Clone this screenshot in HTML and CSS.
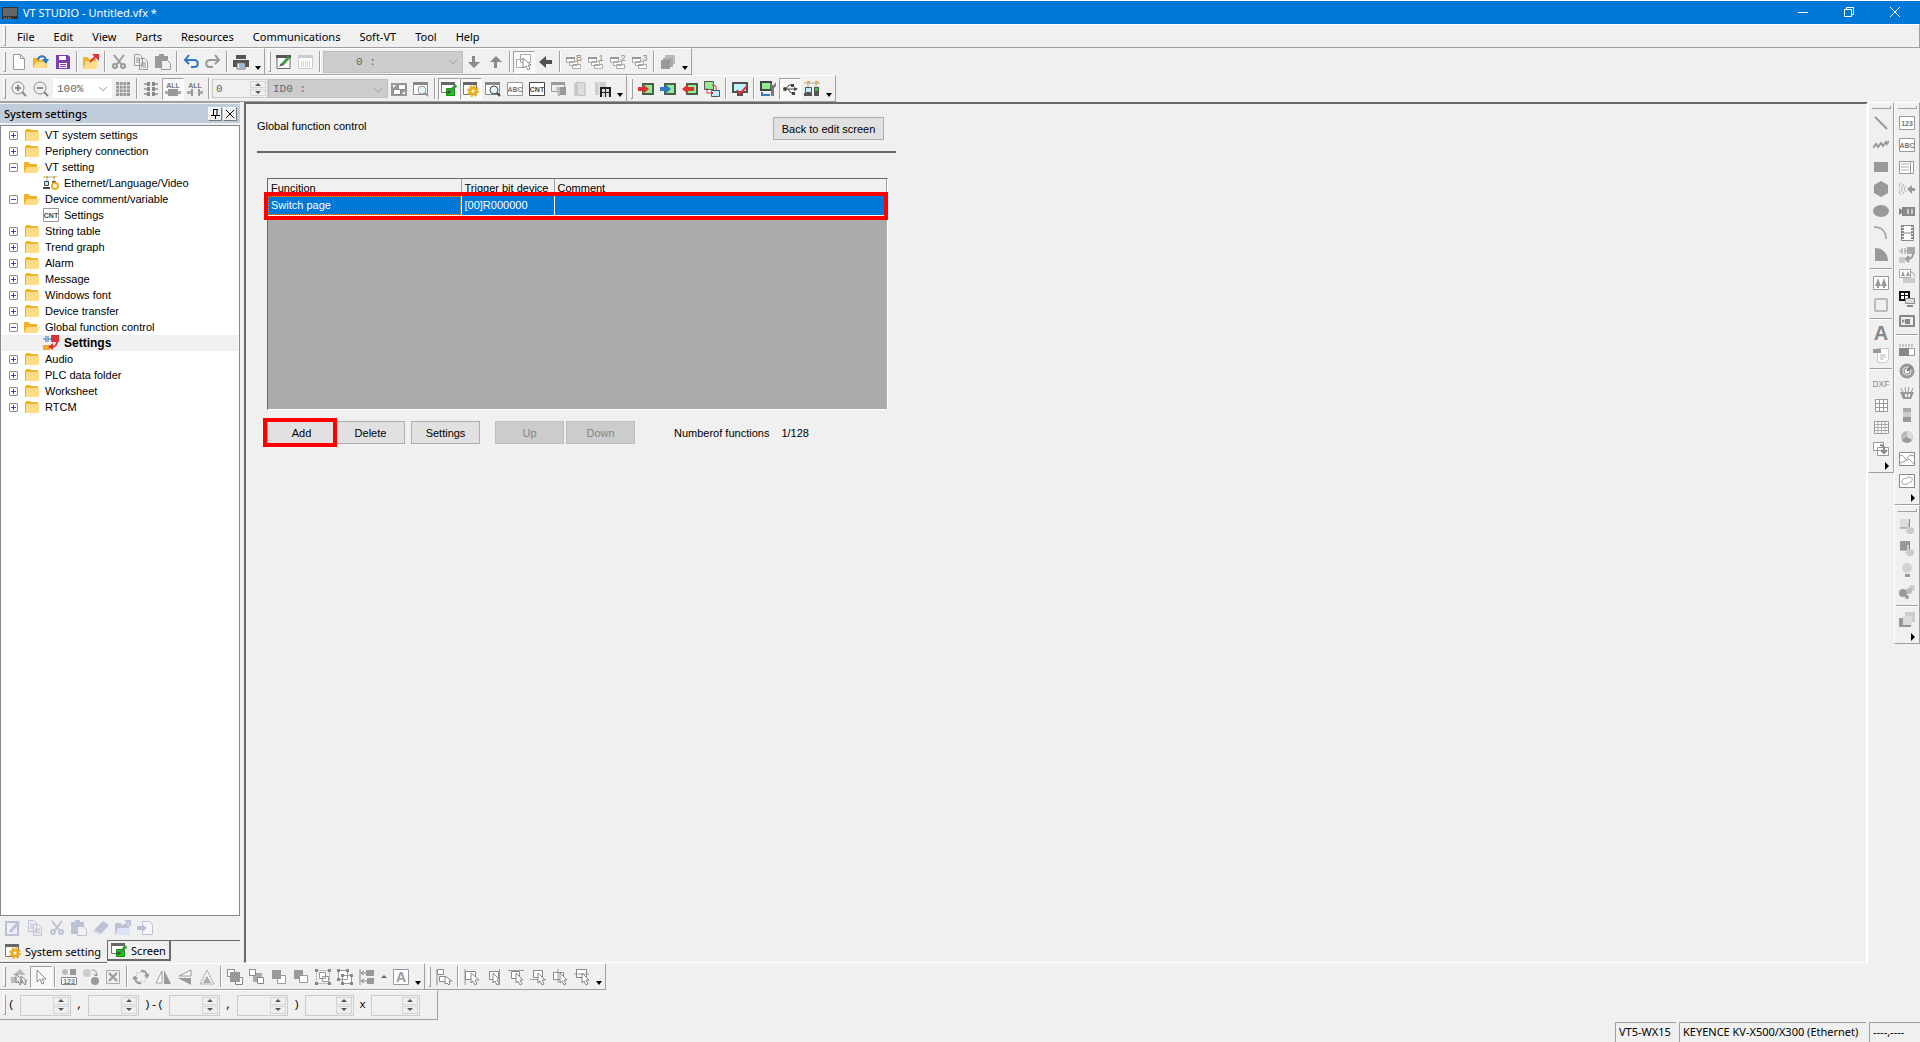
FILE: index.html
```html
<!DOCTYPE html>
<html lang="en">
<head>
  <meta charset="UTF-8">
  <meta name="viewport" content="width=device-width, initial-scale=1.0">
  <title>VT STUDIO - Untitled.vfx *</title>
  <link rel="stylesheet" href="styles.css">
</head>
<body>
  <!-- Icon sprite -->
  <svg class="sprite" aria-hidden="true">
    <symbol id="i-new" viewBox="0 0 16 16"><path d="M2.500.5h7l4 4v11h-11zM9.500.5v4h4" fill="#fff" stroke="#999"/></symbol>
    <symbol id="i-open" viewBox="0 0 16 16"><path d="M0 4h5l1 2h8v8H0z" fill="#efb32f"/><path d="M3 8h12l-2 6H0z" fill="#ffdc86"/><path d="M5 6c1-5 7-5 8 0" fill="none" stroke="#2f78c4" stroke-width="2"/><path d="M9 5h7l-3 5z" fill="#2f78c4"/></symbol>
    <symbol id="i-save" viewBox="0 0 16 16"><path d="M1 1h12l2 2v12H1z" fill="#7d3fb0"/><path d="M4 2h7v4H4zM4 9h8v5H4z" fill="#fff"/><path d="M5 10h6v1H5zM5 12h6v1H5z" fill="#7d3fb0"/></symbol>
    <symbol id="i-export" viewBox="0 0 16 16"><path d="M0 3h5l1 2h7v9H0z" fill="#efb32f"/><path d="M3 7h12l-2 8H0z" fill="#ffdc86"/><path d="M7 8l6-6" stroke="#dc3434" stroke-width="2"/><path d="M9 0h7v7z" fill="#dc3434"/></symbol>
    <symbol id="i-cut" viewBox="0 0 16 16"><g fill="none" stroke="currentColor" stroke-width="2"><path d="M3 1l7 9M13 1l-7 9"/><circle cx="4" cy="12" r="2"/><circle cx="12" cy="12" r="2"/></g></symbol>
    <symbol id="i-copy" viewBox="0 0 16 16"><path d="M1.500.5h5l3 3v8h-8zM6.500 4.500h5l3 3v8h-8z" fill="#f0f0f0" stroke="currentColor"/><path d="M3 4h3M3 6h3M3 8h3M8 9h5M8 11h5M8 13h5" stroke="currentColor"/></symbol>
    <symbol id="i-paste" viewBox="0 0 16 16"><path d="M0 2h4V0h5v2h4v12H0z" fill="currentColor"/><path d="M6.500 6.500h6l3 3v6h-9z" fill="#f0f0f0" stroke="currentColor"/></symbol>
    <symbol id="i-undo" viewBox="0 0 16 16"><path d="M2 6h9c5 0 5 7 0 7H8M6 1L2 6l4 4" fill="none" stroke="currentColor" stroke-width="2"/></symbol>
    <symbol id="i-redo" viewBox="0 0 16 16"><path d="M14 6H5c-5 0-5 7 0 7h3M10 1l4 5-4 4" fill="none" stroke="currentColor" stroke-width="2"/></symbol>
    <symbol id="i-print" viewBox="0 0 16 16"><path d="M3 1h10v4H3zM0 6h16v7H0z" fill="#555"/><path d="M4 9h8v6H4z" fill="#fff" stroke="#666"/><path d="M6 11h5M6 13h5" stroke="#2f78c4"/></symbol>
    <symbol id="i-edit" viewBox="0 0 16 16"><path d="M1 2.500h13v12H1z" fill="#fff" stroke="#666"/><path d="M0 1h15v3H0z" fill="#555"/><path d="M6 11l7-8" stroke="#3aa046" stroke-width="3"/><path d="M3 13l2-4 2 2z" fill="#555"/></symbol>
    <symbol id="i-window" viewBox="0 0 16 16"><path d="M.5 1.500h14v13H.5z" fill="#fff" stroke="#ccc"/><path d="M0 1h15v3H0z" fill="#ccc"/><path d="M3 8h9M3 10h9M3 12h9" stroke="#aaa" stroke-dasharray="1 1"/></symbol>
    <symbol id="i-down" viewBox="0 0 16 16"><path d="M6 2h3v6h5l-6 6-6-6h4z" fill="#8a8a8a"/></symbol>
    <symbol id="i-up" viewBox="0 0 16 16"><path d="M6 14h3V8h5L8 2 2 8h4z" fill="#8a8a8a"/></symbol>
    <symbol id="i-left" viewBox="0 0 16 16"><path d="M14 6v4H8v4L1 8l7-6v4z" fill="#505050"/></symbol>
    <symbol id="i-selwin" viewBox="0 0 16 16"><path d="M4.500.5h10v8h-10zM.5 5.500h8v8h-8z" fill="#fff" stroke="#aaa"/><path d="M7 4v10l3-2 2 4 2-1-2-4h3z" fill="#fff" stroke="#888"/></symbol>
    <symbol id="i-base" viewBox="0 0 16 16"><path d="M6.500 10.500h8v4h-8zM3.500 7.500h8v4h-8zM.5 3.500h8v5h-8z" fill="#fff" stroke="#aaa"/><path d="M0 3h9v2H0z" fill="#999"/></symbol>
    <symbol id="i-layers" viewBox="0 0 16 16"><path d="M5 1h10v9H5z" fill="#bbb"/><path d="M3 4h10v9H3z" fill="#aaa"/><path d="M1 6h9v9H1z" fill="#999"/></symbol>
    <symbol id="i-zoomin" viewBox="0 0 16 16"><g fill="none" stroke="#8a8a8a"><circle cx="7" cy="7" r="6"/><path d="M7 4v6M4 7h6" stroke-width="2"/><path d="M11 11l4 4" stroke-width="2"/></g></symbol>
    <symbol id="i-zoomout" viewBox="0 0 16 16"><g fill="none" stroke="#8a8a8a"><circle cx="7" cy="7" r="6"/><path d="M4 7h6M11 11l4 4" stroke-width="2"/></g></symbol>
    <symbol id="i-dots" viewBox="0 0 16 16"><path d="M1 1h14v14H1z" fill="#999"/><path d="M4.500 1v14M8 1v14M11.500 1v14M1 4.500h14M1 8h14M1 11.500h14" stroke="#ddd"/></symbol>
    <symbol id="i-ladder" viewBox="0 0 16 16"><path d="M1 2h14v2H1zM1 7h14v2H1zM1 12h14v2H1z" fill="#aaa"/><path d="M4 1h8v4H4zM4 6h8v4H4zM4 11h8v4H4z" fill="#888"/><path d="M7 1h2v14H7z" fill="#eee"/></symbol>
    <symbol id="i-all1" viewBox="0 0 16 16"><text x="8" y="7" class="t7" fill="#777">ALL</text><path d="M0 10h16v3H0z" fill="#aaa"/><path d="M3 8h10v7H3z" fill="#999"/></symbol>
    <symbol id="i-all2" viewBox="0 0 16 16"><text x="8" y="7" class="t7" fill="#777">ALL</text><path d="M0 10h6v3H0zM11 10h5v3h-5z" fill="#aaa"/><path d="M4 8h2v7H4zM11 8h2v7h-2z" fill="#999"/></symbol>
    <symbol id="i-swap" viewBox="0 0 16 16"><path d="M0 2h16v13H0z" fill="#999"/><path d="M7.500 3.500h7v5h-7zM2.500 8.500h7v5h-7z" fill="#fff" stroke="#888"/><path d="M2 7V4h3zM14 10v3h-3z" fill="#fff"/></symbol>
    <symbol id="i-find" viewBox="0 0 16 16"><path d="M.5 1.500h14v12H.5z" fill="#fff" stroke="#888"/><path d="M0 1h15v3H0z" fill="#888"/><circle cx="9" cy="9" r="4" fill="#e6f6fc" stroke="currentColor"/><path d="M12 12l3 3" stroke="currentColor" stroke-width="2"/></symbol>
    <symbol id="i-screen" viewBox="0 0 16 16"><path d="M.5 1.500h13v10H.5z" fill="#fff" stroke="#777"/><path d="M0 1h14v3H0z" fill="#666"/><path d="M5.500 7.500h8v7h-8z" fill="#0bd80b" stroke="#168a16"/><path d="M8 12l7-8" stroke="#3c983c" stroke-width="3"/><path d="M6 13l1-4 3 3z" fill="#444"/></symbol>
    <symbol id="i-gear" viewBox="0 0 16 16"><path d="M.5 1.500h13v12H.5z" fill="#fff" stroke="#777"/><path d="M0 1h14v3H0z" fill="#666"/><circle cx="10" cy="10" r="5" fill="none" stroke="#edae24" stroke-width="2" stroke-dasharray="2 1.900"/><circle cx="10" cy="10" r="3" fill="#fff" stroke="#edae24" stroke-width="3"/></symbol>
    <symbol id="i-abc" viewBox="0 0 16 16"><path d="M.5 1.500h15v13H.5z" fill="#fff" stroke="currentColor"/><text x="8" y="11" class="t7" fill="#777">ABC</text></symbol>
    <symbol id="i-cnt" viewBox="0 0 16 16"><path d="M.5 1.500h15v13H.5z" fill="#fff" stroke="currentColor"/><text x="8" y="11" class="t7" fill="#444">CNT</text></symbol>
    <symbol id="i-123" viewBox="0 0 16 16"><path d="M.5 1.500h15v13H.5z" fill="#fff" stroke="currentColor"/><text x="8" y="11" class="t7" fill="#777">123</text></symbol>
    <symbol id="i-panel" viewBox="0 0 16 16"><path d="M.5 2.500h13v8H.5z" fill="#eee" stroke="#999"/><path d="M0 1h14v3H0z" fill="#999"/><path d="M5 6h10v7H9v2H7z" fill="#bbb"/><path d="M9 6h6v8H9z" fill="#999"/></symbol>
    <symbol id="i-book" viewBox="0 0 16 16"><path d="M1 2l9-1v13l-9 1z" fill="#ccc"/><path d="M4 1l8 1v13l-8-1z" fill="#ddd" stroke="#bbb"/></symbol>
    <symbol id="i-lib" viewBox="0 0 16 16"><path d="M0 1h11v13H0z" fill="#ccc"/><path d="M4 1v13" stroke="#eee"/><path d="M5 6h11v10H5z" fill="#222"/><path d="M7 8h3v3H7zM11 8h3v3h-3zM7 12h3v4H7zM11 12h3v4h-3z" fill="#ddd"/></symbol>
    <symbol id="i-send" viewBox="0 0 16 16"><path d="M4 2h12v12H4z" fill="#4a5f4a"/><path d="M6 4h8v8H6z" fill="#90ee90"/><path d="M0 6h5V3l6 5-6 5v-3H0z" fill="currentColor"/></symbol>
    <symbol id="i-recv" viewBox="0 0 16 16"><path d="M4 2h12v12H4z" fill="#4a5f4a"/><path d="M6 4h8v8H6z" fill="#90ee90"/><path d="M12 6H6V3L0 8l6 5v-3h6z" fill="#dc3434"/></symbol>
    <symbol id="i-sync" viewBox="0 0 16 16"><path d="M.5.5h9v8h-9z" fill="#90ee90" stroke="#555"/><path d="M7.500 9.500h8v6h-8z" fill="#bdeaff" stroke="#555"/><path d="M3 7v5h6M7 10l2 2-2 2M8 4l4 1v4" fill="none" stroke="#dc3434"/></symbol>
    <symbol id="i-check" viewBox="0 0 16 16"><path d="M0 1h16v11H0zM5 12h6v3H5z" fill="#505050"/><path d="M2 3h12v7H2z" fill="#bdf3ff"/><path d="M5 9l3 4 7-8" fill="none" stroke="#dc3434" stroke-width="2"/></symbol>
    <symbol id="i-tool" viewBox="0 0 16 16"><path d="M0 0h12v10H0z" fill="#444"/><path d="M2 2h8v6H2z" fill="#90ee90"/><path d="M10 1l2 3h2l2-3v4l-2 2v8h-3V7l-1-2z" fill="#777"/><path d="M2 11v3h8" fill="none" stroke="#2f78c4" stroke-width="2"/></symbol>
    <symbol id="i-usb" viewBox="0 0 16 16"><path d="M2 8h13M4 8l3-4h3M6 8l3 4h3" fill="none" stroke="#444"/><circle cx="3" cy="8" r="2" fill="#444"/><path d="M12 6l4 2-4 2zM9 3h3v3H9zM10 11h3v3h-3z" fill="#444"/></symbol>
    <symbol id="i-net" viewBox="0 0 16 16"><path d="M0 2h16M4 2v5M12 2v5" stroke="#aaa"/><path d="M3 0h3v3H3zM11 0h3v3h-3z" fill="#edae24"/><path d="M1.500 6.500h6v5h-6z" fill="#bdeaff" stroke="#555"/><path d="M0 12h8v3H0zM10 6h5v9h-5z" fill="#555"/><path d="M11 7h3v3h-3z" fill="#3c3"/></symbol>
    <symbol id="i-ether" viewBox="0 0 16 16"><path d="M0 2h14M4 2v5M11 2v5" stroke="#aaa"/><path d="M3 1h2v2H3zM10 1h2v2h-2z" fill="#edae24"/><path d="M1.500 6.500h4v4h-4z" fill="#bdeaff" stroke="#444"/><path d="M0 12h7v2H0z" fill="#444"/><path d="M9 6h4v5H9z" fill="#666"/><circle cx="12" cy="11" r="3" fill="#fff" stroke="#edae24" stroke-width="2"/></symbol>
    <symbol id="i-global" viewBox="0 0 16 16"><path d="M0 4h3M3 1v6M5 1v6M5 4h3" stroke="#2f78c4" fill="none"/><path d="M8 0h8v7H8z" fill="#dc3434"/><path d="M0 10h7v5H0z" fill="#edae24"/><path d="M14 6c0 5-2 6-6 6" fill="none" stroke="#dc3434" stroke-width="2"/><path d="M10 8v7l-5-3z" fill="#dc3434"/></symbol>
    <symbol id="i-folder" viewBox="0 0 16 16"><path d="M1 3h1V2h4l1 1h7v11H1z" fill="#efb32f"/><path d="M2 5h13v9H2z" fill="#ffdc86"/></symbol>
    <symbol id="i-folder-open" viewBox="0 0 16 16"><path d="M0 3h5l1 2h7v9H0z" fill="#efb32f"/><path d="M3 8h13l-3 6H0z" fill="#ffdc86"/></symbol>

    <!-- Drawing parts -->
    <symbol id="i-line" viewBox="0 0 16 16"><path d="M2 2l12 12" stroke="#999" stroke-width="2"/></symbol>
    <symbol id="i-poly" viewBox="0 0 16 16"><path d="M0 11l3-4 2 3 3-4 2 3 3-4 1 2 2-3" fill="none" stroke="#999" stroke-width="2"/></symbol>
    <symbol id="i-rect" viewBox="0 0 16 16"><path d="M1 3h14v10H1z" fill="#999"/></symbol>
    <symbol id="i-hex" viewBox="0 0 16 16"><path d="M8 0l7 4v8l-7 4-7-4V4z" fill="#999"/></symbol>
    <symbol id="i-ellipse" viewBox="0 0 16 16"><ellipse cx="8" cy="8" rx="8" ry="6" fill="#999"/></symbol>
    <symbol id="i-arc" viewBox="0 0 16 16"><path d="M1 2c7 0 12 4 12 12" fill="none" stroke="#aaa" stroke-width="2"/></symbol>
    <symbol id="i-fan" viewBox="0 0 16 16"><path d="M2 1c8 0 13 6 13 13H2z" fill="#999"/></symbol>
    <symbol id="i-pic" viewBox="0 0 16 16"><path d="M.5 1.500h15v13H.5z" fill="#fff" stroke="#999"/><path d="M5 3l3 8H2zM11 3l3 8H8zM4 11h2v2H4zM10 11h2v2h-2z" fill="#999"/></symbol>
    <symbol id="i-frame" viewBox="0 0 16 16"><rect x="2" y="2" width="12" height="12" rx="1" fill="none" stroke="#bbb" stroke-width="2"/></symbol>
    <symbol id="i-text" viewBox="0 0 16 16"><text x="8" y="15" class="t20" fill="#888">A</text></symbol>
    <symbol id="i-note" viewBox="0 0 16 16"><path d="M4.500 1.500h11v11l-3 3h-8z" fill="#fff" stroke="#ccc"/><path d="M0 2h8v4H0z" fill="#999"/><path d="M7 8h6M7 10h6M7 12h4" stroke="#bbb"/></symbol>
    <symbol id="i-dxf" viewBox="0 0 16 16"><text x="8" y="12" class="t9" fill="#888">DXF</text></symbol>
    <symbol id="i-grid" viewBox="0 0 16 16"><path d="M2.500 2.500h12v12h-12zM6.500 2.500v12M10.500 2.500v12M2.500 6.500h12M2.500 10.500h12" fill="#fff" stroke="#999"/></symbol>
    <symbol id="i-grid2" viewBox="0 0 16 16"><path d="M1.500 2.500h14v12h-14z" fill="#fff" stroke="#999"/><path d="M5 3v11M8.500 3v11M12 3v11M2 5.500h13M2 8.500h13M2 11.500h13" stroke="#aaa"/></symbol>
    <symbol id="i-winarrow" viewBox="0 0 16 16"><path d="M.5 1.500h10v8H.5zM4.500 6.500h11v8h-11z" fill="#fff" stroke="#999"/><path d="M7 4c4 0 4 2 4 6M8 9l3 3 3-3" fill="none" stroke="#888" stroke-width="2"/></symbol>
    <symbol id="i-list" viewBox="0 0 16 16"><path d="M.5 2.500h14v12H.5zM11.500 2v12" fill="#fff" stroke="#999"/><path d="M2 5h8M2 8h8M2 11h8" stroke="#aaa"/></symbol>
    <symbol id="i-sound" viewBox="0 0 16 16"><path d="M8 8l5-4v3h3v3h-3v3z" fill="#999"/><path d="M7 5c-2 2-2 4 0 6M5 3c-3 3-3 7 0 10M2 2c-3 4-3 8 0 12" fill="none" stroke="#aaa"/></symbol>
    <symbol id="i-video" viewBox="0 0 16 16"><path d="M0 5l3 2V4h13v9H3v-3l-3 2z" fill="#888"/><path d="M8 6h2v5H8zM12 6h2v5h-2z" fill="#ccc"/></symbol>
    <symbol id="i-film" viewBox="0 0 16 16"><path d="M2.500.5h12v15h-12z" fill="#fff" stroke="#888"/><path d="M4 0v16M13 0v16" stroke="#888" stroke-width="2" stroke-dasharray="2 1"/><path d="M4 8h9" stroke="#888"/></symbol>
    <symbol id="i-glob2" viewBox="0 0 16 16"><path d="M0 4h3M3 1v6M6 1v6M6 4h3" stroke="#999"/><path d="M8 0h8v7H8z" fill="#aaa"/><path d="M0 10h6v6H0z" fill="#ccc"/><path d="M14 6c0 5-2 6-6 6M10 9l-3 3 3 3" fill="none" stroke="#999" stroke-width="2"/></symbol>
    <symbol id="i-picfold" viewBox="0 0 16 16"><path d="M.5.5h11v8H.5z" fill="#fff" stroke="#aaa"/><path d="M4 2l2 5H2zM9 2l2 5H7z" fill="#999"/><path d="M4 9h10l2-2v7H4z" fill="#ccc"/><path d="M11 3c4 0 4 2 4 4" fill="none" stroke="#999"/></symbol>
    <symbol id="i-pcwin" viewBox="0 0 16 16"><path d="M1 1h9v8H1z" fill="#fff" stroke="#111" stroke-width="2"/><path d="M5.500 1v8M1 4.500h9" stroke="#111"/><path d="M6.500 7.500h9v5h-9z" fill="#ddd" stroke="#888"/><path d="M8 14h6v2H8z" fill="#888"/></symbol>
    <symbol id="i-cam" viewBox="0 0 16 16"><rect y="2" width="16" height="12" rx="1" fill="#888"/><path d="M2 4h12v8H2z" fill="#eee"/><path d="M3 6l3 2-3 2zM6 6h5v5H6z" fill="#888"/></symbol>
    <symbol id="i-bar" viewBox="0 0 16 16"><path d="M1 3v3M4 3v3M7 3v3M10 3v3M13 3v3" stroke="#999"/><path d="M.5 7.500h15v7H.5z" fill="#fff" stroke="#999"/><path d="M0 7h10v8H0z" fill="#888"/></symbol>
    <symbol id="i-meter" viewBox="0 0 16 16"><circle cx="8" cy="8" r="6" fill="#ddd" stroke="#999" stroke-width="3"/><circle cx="8" cy="8" r="3" fill="#fff" stroke="#888"/><path d="M8 8l4-4" stroke="#777" stroke-width="2"/></symbol>
    <symbol id="i-gauge" viewBox="0 0 16 16"><path d="M1 7h14l-3 7H4z" fill="#999"/><path d="M2 3l2 5M6 2l1 6M10 2L9 8M14 3l-2 5" stroke="#999"/><path d="M6 9h2v3H6zM9 9h2v3H9z" fill="#eee"/></symbol>
    <symbol id="i-stack" viewBox="0 0 16 16"><path d="M4 1h8v4H4z" fill="#aaa"/><path d="M4 5h8v5H4z" fill="#ccc"/><path d="M4 10h8v5H4z" fill="#999"/></symbol>
    <symbol id="i-pie" viewBox="0 0 16 16"><circle cx="8" cy="8" r="6" fill="#bbb"/><path d="M8 8V2a6 6 0 0 1 5 9z" fill="#ddd"/><path d="M8 8l5 3a6 6 0 0 1-10 0z" fill="#999"/></symbol>
    <symbol id="i-trend" viewBox="0 0 16 16"><path d="M.5 1.500h15v13H.5z" fill="#fff" stroke="#888"/><path d="M1 5c4-4 5 8 9 3l5 5M1 12l5-2 5-6 4 1" fill="none" stroke="#999"/></symbol>
    <symbol id="i-loop" viewBox="0 0 16 16"><path d="M.5 1.500h15v13H.5z" fill="#fff" stroke="#888"/><path d="M3 9c0-5 4-2 6-5 5 0 5 3 3 5-2 0-3 3-5 2-2 1-4 0-4-2z" fill="none" stroke="#999"/></symbol>
    <symbol id="i-touch" viewBox="0 0 16 16"><path d="M1 1h9v9H1z" fill="currentColor"/><path d="M10.500 1v9H1" fill="none" stroke="#888"/><path d="M8 5h2v4l5 1v4l-2 2H9l-3-4h2z" fill="#ccc"/></symbol>
    <symbol id="i-bulb" viewBox="0 0 16 16"><circle cx="8" cy="6" r="5" fill="#d4d4d4"/><path d="M6 12h5v3H6z" fill="#999"/></symbol>
    <symbol id="i-blobs" viewBox="0 0 16 16"><circle cx="4" cy="9" r="4" fill="#999"/><circle cx="8" cy="13" r="2" fill="#999"/><circle cx="13" cy="4" r="3" fill="#ccc"/><circle cx="10" cy="7" r="3" fill="#bbb"/></symbol>
    <symbol id="i-stackwin" viewBox="0 0 16 16"><path d="M6 0h10v10H6z" fill="#ccc"/><path d="M0 6h6v6h6v3H0z" fill="#999"/><path d="M4 4h9v9H4z" fill="#ddd"/></symbol>

    <!-- Bottom edit tools -->
    <symbol id="i-arrow" viewBox="0 0 16 16"><path d="M4 1v12l3-3 2 5 2-1-2-4h4z" fill="#fff" stroke="#888"/></symbol>
    <symbol id="i-parts" viewBox="0 0 16 16"><path d="M2 6l7-6 6 6zM0 8h8v6H0z" fill="#bbb"/><path d="M5 5v9l2-2 2 4 1-1-1-3h3zM10 7v7l2-1 2 3 1-1-1-3h2z" fill="#eee" stroke="#888"/></symbol>
    <symbol id="i-show" viewBox="0 0 16 16"><circle cx="4" cy="3" r="3" fill="#bbb"/><path d="M9 0h6v6H9z" fill="#999"/><path d="M.5 8.500h15v7H.5z" fill="#fff" stroke="#888"/><text x="8" y="15" class="t7" fill="#777">123</text></symbol>
    <symbol id="i-convert" viewBox="0 0 16 16"><circle cx="4" cy="4" r="4" fill="#ccc"/><circle cx="12" cy="12" r="4" fill="#999"/><path d="M9 1c4 0 5 2 4 6M11 5l2 2 2-2" fill="none" stroke="#888"/></symbol>
    <symbol id="i-xbox" viewBox="0 0 16 16"><path d="M1.500 1.500h13v13h-13z" fill="#eee" stroke="#aaa"/><path d="M4 4l8 8M12 4l-8 8" stroke="#999" stroke-width="2"/></symbol>
    <symbol id="i-rotate" viewBox="0 0 16 16"><path d="M3.500 3.500h9v9h-9z" fill="none" stroke="#aaa" stroke-dasharray="1 2"/><path d="M8 2c4-1 6 2 6 6M12 6l2 2 2-3M8 14c-4 1-6-2-6-6M0 10l2-2 2 2" fill="none" stroke="#999" stroke-width="2"/></symbol>
    <symbol id="i-fliph" viewBox="0 0 16 16"><path d="M7 2v12H1z" fill="#fff" stroke="#999"/><path d="M9 1v14h7z" fill="#999"/></symbol>
    <symbol id="i-flipv" viewBox="0 0 16 16"><path d="M14 1v6H2z" fill="#fff" stroke="#999"/><path d="M14 9v7L1 9z" fill="#999"/></symbol>
    <symbol id="i-tri" viewBox="0 0 16 16"><path d="M8 1l7 14H1z" fill="none" stroke="#999" stroke-dasharray="2 1"/><path d="M8 7l4 7H4z" fill="#aaa"/></symbol>
    <symbol id="i-front" viewBox="0 0 16 16"><path d="M.5.5h7v7h-7zM8.500 8.500h7v7h-7z" fill="#fff" stroke="#888"/><path d="M3 3h10v10H3z" fill="#999"/></symbol>
    <symbol id="i-back" viewBox="0 0 16 16"><path d="M4 4h9v9H4z" fill="#aaa"/><path d="M.5.5h6v6h-6zM8.500 8.500h6v6h-6z" fill="#fff" stroke="#888"/></symbol>
    <symbol id="i-fwd" viewBox="0 0 16 16"><path d="M6.500 6.500h8v8h-8z" fill="#fff" stroke="#999"/><path d="M1 1h9v9H1z" fill="#999"/></symbol>
    <symbol id="i-bwd" viewBox="0 0 16 16"><path d="M1 1h9v9H1z" fill="#999"/><path d="M6.500 6.500h8v7h-8z" fill="#fff" stroke="#999"/></symbol>
    <symbol id="i-group" viewBox="0 0 16 16"><path d="M1.500 1.500h13v13h-13z" fill="none" stroke="#aaa" stroke-dasharray="2 1"/><path d="M0 0h3v3H0zM13 0h3v3h-3zM0 13h3v3H0zM13 13h3v3h-3z" fill="#888"/><path d="M4.500 3.500h6v6h-6zM7.500 7.500h6v5h-6z" fill="#fff" stroke="#999"/></symbol>
    <symbol id="i-ungroup" viewBox="0 0 16 16"><path d="M1.500 1.500h9v9h-9zM5.500 6.500h9v8h-9z" fill="#fff" stroke="#999"/><path d="M0 0h3v3H0zM9 0h3v3H9zM0 9h3v3H0zM4 5h3v3H4zM13 5h3v3h-3zM4 13h3v3H4zM13 13h3v3h-3z" fill="#888"/></symbol>
    <symbol id="i-align" viewBox="0 0 16 16"><path d="M1 0v16M2 4h5M2 12h6M5 2L2 4l3 2M5 10l-3 2 3 2" stroke="#888" fill="none"/><path d="M7 1h8v6H7zM8 9h7v6H8z" fill="#999"/></symbol>
    <symbol id="i-abox" viewBox="0 0 16 16"><path d="M.5.5h15v15H.5z" fill="#fff" stroke="#999"/><text x="8" y="13" class="t14" fill="#999">A</text></symbol>
    <symbol id="i-asel" viewBox="0 0 16 16"><path d="M1 0v16" stroke="#888"/><path d="M1.500.5h6v5h-6zM3.500 7.500h6v5h-6z" fill="#fff" stroke="#888"/><path d="M9 7v8l2-1 2 2 1-1-1-3h3z" fill="#fff" stroke="#888"/></symbol>
    <symbol id="i-al" viewBox="0 0 16 16"><path d="M1 0v16" stroke="#999"/><path d="M1.500 2.500h10v8h-10z" fill="#fff" stroke="#888"/><path d="M7 4v10l2-2 2 4 2-1-2-4h4z" fill="#fff" stroke="#888"/></symbol>
    <symbol id="i-ar" viewBox="0 0 16 16"><path d="M13.500 0v16" stroke="#999"/><path d="M3.500 2.500h9v8h-9z" fill="#fff" stroke="#888"/><path d="M7 4v10l2-2 2 4 2-1-2-4h3z" fill="#fff" stroke="#888"/></symbol>
    <symbol id="i-at" viewBox="0 0 16 16"><path d="M0 1.500h16" stroke="#999"/><path d="M3.500 2.500h8v7h-8z" fill="#fff" stroke="#888"/><path d="M8 4v10l2-2 2 4 2-1-2-4h3z" fill="#fff" stroke="#888"/></symbol>

    <symbol id="i-app" viewBox="0 0 16 16"><path d="M0 2h16v12H0z" fill="#333"/><path d="M1 3h14v8H1z" fill="#666"/><path d="M2 13h7" stroke="#bbb" stroke-dasharray="1 1"/></symbol>
    <symbol id="i-penbox" viewBox="0 0 16 16"><path d="M1 2h12v13H1z" fill="#eef" stroke="currentColor" stroke-width="2"/><path d="M5 12l9-10" stroke="currentColor" stroke-width="3"/></symbol>
    <symbol id="i-eraser" viewBox="0 0 16 16"><path d="M1 10l9-9 6 4-8 9z" fill="currentColor"/><path d="M1 10l7 4-2 1-6-3z" fill="#dde"/></symbol>
    <symbol id="i-fopen" viewBox="0 0 16 16"><path d="M0 3h6l1 2h7v10H0z" fill="currentColor"/><path d="M3 8h13l-3 7H0z" fill="#dbe3f4"/><path d="M8 6l6-4M10 1h5v5" fill="none" stroke="currentColor" stroke-width="2"/></symbol>
    <symbol id="i-import" viewBox="0 0 16 16"><path d="M5.500 1.500h7l3 3v10h-10z" fill="#f4f4fb" stroke="currentColor"/><path d="M0 6h5V4l5 4-5 4v-2H0z" fill="currentColor"/></symbol>
  </svg>

  <header class="titlebar">
    <svg class="icon"><use href="#i-app"/></svg>
    <h1>VT STUDIO - Untitled.vfx *</h1>
    <div class="window-buttons">
      <button aria-label="Minimize"><svg viewBox="0 0 10 10"><path d="M0 5.500h10"/></svg></button>
      <button aria-label="Restore"><svg viewBox="0 0 10 10"><path d="M.5 2.500h7v7h-7zM2.500 2V.5h7v7H8"/></svg></button>
      <button aria-label="Close"><svg viewBox="0 0 10 10"><path d="M0 0l10 10M10 0L0 10"/></svg></button>
    </div>
  </header>

  <nav class="menubar">
    <span class="grip"></span>
    <a href="#">File</a>
    <a href="#">Edit</a>
    <a href="#">View</a>
    <a href="#">Parts</a>
    <a href="#">Resources</a>
    <a href="#">Communications</a>
    <a href="#">Soft-VT</a>
    <a href="#">Tool</a>
    <a href="#">Help</a>
  </nav>

  <div class="toolbar-row">
    <div class="toolbar">
      <span class="grip"></span>
      <button class="tool" aria-label="New"><svg class="icon"><use href="#i-new"/></svg></button>
      <button class="tool" aria-label="Open"><svg class="icon"><use href="#i-open"/></svg></button>
      <button class="tool" aria-label="Save"><svg class="icon"><use href="#i-save"/></svg></button>
      <span class="sep"></span>
      <button class="tool" aria-label="Export"><svg class="icon"><use href="#i-export"/></svg></button>
      <span class="sep"></span>
      <button class="tool" aria-label="Cut"><svg class="icon"><use href="#i-cut"/></svg></button>
      <button class="tool" aria-label="Copy"><svg class="icon"><use href="#i-copy"/></svg></button>
      <button class="tool" aria-label="Paste"><svg class="icon"><use href="#i-paste"/></svg></button>
      <span class="sep"></span>
      <button class="tool blue" aria-label="Undo"><svg class="icon"><use href="#i-undo"/></svg></button>
      <button class="tool" aria-label="Redo"><svg class="icon"><use href="#i-redo"/></svg></button>
      <span class="sep"></span>
      <button class="tool" aria-label="Print"><svg class="icon"><use href="#i-print"/></svg></button>
      <button class="more" aria-label="More"></button>
    </div>
    <div class="toolbar">
      <span class="grip"></span>
      <button class="tool" aria-label="Edit screen"><svg class="icon"><use href="#i-edit"/></svg></button>
      <button class="tool" aria-label="Screen list"><svg class="icon"><use href="#i-window"/></svg></button>
      <span class="sep"></span>
      <span class="combo gray page-combo"><select aria-label="Page" disabled><option>0 :</option></select><svg viewBox="0 0 9 5"><path d="M0 0l4 4 4-4"/></svg></span>
      <button class="tool" aria-label="Next page"><svg class="icon"><use href="#i-down"/></svg></button>
      <button class="tool" aria-label="Previous page"><svg class="icon"><use href="#i-up"/></svg></button>
      <span class="sep"></span>
      <button class="tool pressed" aria-label="Select"><svg class="icon"><use href="#i-selwin"/></svg></button>
      <button class="tool" aria-label="Back"><svg class="icon"><use href="#i-left"/></svg></button>
      <span class="sep"></span>
      <button class="tool" aria-label="Base"><svg class="icon" viewBox="0 0 16 16"><use href="#i-base"/><text x="13" y="7" class="t9">B</text></svg></button>
      <button class="tool" aria-label="Window 1"><svg class="icon" viewBox="0 0 16 16"><use href="#i-base"/><text x="13" y="7" class="t9">1</text></svg></button>
      <button class="tool" aria-label="Window 2"><svg class="icon" viewBox="0 0 16 16"><use href="#i-base"/><text x="13" y="7" class="t9">2</text></svg></button>
      <button class="tool" aria-label="Window 3"><svg class="icon" viewBox="0 0 16 16"><use href="#i-base"/><text x="13" y="7" class="t9">3</text></svg></button>
      <span class="sep"></span>
      <button class="tool" aria-label="Layers"><svg class="icon"><use href="#i-layers"/></svg></button>
      <button class="more" aria-label="More"></button>
    </div>
  </div>

  <div class="toolbar-row">
    <div class="toolbar">
      <span class="grip"></span>
      <button class="tool" aria-label="Zoom in"><svg class="icon"><use href="#i-zoomin"/></svg></button>
      <button class="tool" aria-label="Zoom out"><svg class="icon"><use href="#i-zoomout"/></svg></button>
      <span class="combo zoom-combo"><select aria-label="Zoom"><option>100%</option></select><svg viewBox="0 0 9 5"><path d="M0 0l4 4 4-4"/></svg></span>
      <button class="tool" aria-label="Grid"><svg class="icon"><use href="#i-dots"/></svg></button>
      <span class="sep"></span>
      <button class="tool" aria-label="Contacts"><svg class="icon"><use href="#i-ladder"/></svg></button>
      <button class="tool pressed" aria-label="All on"><svg class="icon"><use href="#i-all1"/></svg></button>
      <button class="tool" aria-label="All off"><svg class="icon"><use href="#i-all2"/></svg></button>
      <span class="sep"></span>
      <span class="spin id-spin"><input type="text" value="0" aria-label="ID number"><span class="spin-buttons"><button aria-label="Up"></button><button aria-label="Down"></button></span></span>
      <span class="combo gray id-combo"><select aria-label="ID" disabled><option>ID0 :</option></select><svg viewBox="0 0 9 5"><path d="M0 0l4 4 4-4"/></svg></span>
      <button class="tool" aria-label="Switch"><svg class="icon"><use href="#i-swap"/></svg></button>
      <button class="tool" aria-label="Search"><svg class="icon"><use href="#i-find"/></svg></button>
      <span class="sep"></span>
      <button class="tool pressed" aria-label="Screen"><svg class="icon"><use href="#i-screen"/></svg></button>
      <button class="tool pressed" aria-label="System setting"><svg class="icon"><use href="#i-gear"/></svg></button>
      <button class="tool dark" aria-label="Find"><svg class="icon"><use href="#i-find"/></svg></button>
      <button class="tool" aria-label="Text"><svg class="icon"><use href="#i-abc"/></svg></button>
      <button class="tool dark" aria-label="Comment"><svg class="icon"><use href="#i-cnt"/></svg></button>
      <button class="tool" aria-label="Panel"><svg class="icon"><use href="#i-panel"/></svg></button>
      <button class="tool" aria-label="Library"><svg class="icon"><use href="#i-book"/></svg></button>
      <button class="tool" aria-label="Parts library"><svg class="icon"><use href="#i-lib"/></svg></button>
      <button class="more" aria-label="More"></button>
    </div>
    <div class="toolbar">
      <span class="grip"></span>
      <button class="tool red" aria-label="Send"><svg class="icon"><use href="#i-send"/></svg></button>
      <button class="tool blue" aria-label="Send changes"><svg class="icon"><use href="#i-send"/></svg></button>
      <button class="tool" aria-label="Receive"><svg class="icon"><use href="#i-recv"/></svg></button>
      <button class="tool" aria-label="Verify"><svg class="icon"><use href="#i-sync"/></svg></button>
      <span class="sep"></span>
      <button class="tool" aria-label="Check"><svg class="icon"><use href="#i-check"/></svg></button>
      <span class="sep"></span>
      <button class="tool" aria-label="Communication settings"><svg class="icon"><use href="#i-tool"/></svg></button>
      <button class="tool pressed" aria-label="USB"><svg class="icon"><use href="#i-usb"/></svg></button>
      <button class="tool" aria-label="Network"><svg class="icon"><use href="#i-net"/></svg></button>
      <button class="more" aria-label="More"></button>
    </div>
  </div>

  <div class="workspace">
    <aside class="sidebar">
      <div class="panel-header">
        <h2>System settings</h2>
        <button aria-label="Pin"><svg viewBox="0 0 10 10"><path d="M3 .5h5M3.500 0v6M7 0v6M1 6.500h9M5.500 6v4"/></svg></button>
        <button aria-label="Close panel"><svg viewBox="0 0 10 10"><path d="M1 1l8 8M9 1L1 9"/></svg></button>
      </div>
      <ul class="tree">
        <li><button class="expander plus" aria-label="Expand"></button><svg class="icon"><use href="#i-folder"/></svg>VT system settings</li>
        <li><button class="expander plus" aria-label="Expand"></button><svg class="icon"><use href="#i-folder"/></svg>Periphery connection</li>
        <li><button class="expander" aria-label="Collapse"></button><svg class="icon"><use href="#i-folder-open"/></svg>VT setting</li>
        <li class="child"><svg class="icon"><use href="#i-ether"/></svg>Ethernet/Language/Video</li>
        <li><button class="expander" aria-label="Collapse"></button><svg class="icon"><use href="#i-folder-open"/></svg>Device comment/variable</li>
        <li class="child"><svg class="icon"><use href="#i-cnt"/></svg>Settings</li>
        <li><button class="expander plus" aria-label="Expand"></button><svg class="icon"><use href="#i-folder"/></svg>String table</li>
        <li><button class="expander plus" aria-label="Expand"></button><svg class="icon"><use href="#i-folder"/></svg>Trend graph</li>
        <li><button class="expander plus" aria-label="Expand"></button><svg class="icon"><use href="#i-folder"/></svg>Alarm</li>
        <li><button class="expander plus" aria-label="Expand"></button><svg class="icon"><use href="#i-folder"/></svg>Message</li>
        <li><button class="expander plus" aria-label="Expand"></button><svg class="icon"><use href="#i-folder"/></svg>Windows font</li>
        <li><button class="expander plus" aria-label="Expand"></button><svg class="icon"><use href="#i-folder"/></svg>Device transfer</li>
        <li><button class="expander" aria-label="Collapse"></button><svg class="icon"><use href="#i-folder-open"/></svg>Global function control</li>
        <li class="child selected"><svg class="icon"><use href="#i-global"/></svg>Settings</li>
        <li><button class="expander plus" aria-label="Expand"></button><svg class="icon"><use href="#i-folder"/></svg>Audio</li>
        <li><button class="expander plus" aria-label="Expand"></button><svg class="icon"><use href="#i-folder"/></svg>PLC data folder</li>
        <li><button class="expander plus" aria-label="Expand"></button><svg class="icon"><use href="#i-folder"/></svg>Worksheet</li>
        <li><button class="expander plus" aria-label="Expand"></button><svg class="icon"><use href="#i-folder"/></svg>RTCM</li>
      </ul>
      <div class="tree-tools">
        <button class="tool" aria-label="Edit"><svg class="icon"><use href="#i-penbox"/></svg></button>
        <button class="tool" aria-label="Copy"><svg class="icon"><use href="#i-copy"/></svg></button>
        <button class="tool" aria-label="Cut"><svg class="icon"><use href="#i-cut"/></svg></button>
        <button class="tool" aria-label="Paste"><svg class="icon"><use href="#i-paste"/></svg></button>
        <button class="tool" aria-label="Delete"><svg class="icon"><use href="#i-eraser"/></svg></button>
        <button class="tool" aria-label="Open"><svg class="icon"><use href="#i-fopen"/></svg></button>
        <button class="tool" aria-label="Import"><svg class="icon"><use href="#i-import"/></svg></button>
      </div>
      <div class="tabs">
        <button class="tab active"><svg class="icon"><use href="#i-gear"/></svg>System setting</button>
        <button class="tab"><svg class="icon"><use href="#i-screen"/></svg>Screen</button>
      </div>
    </aside>

    <main class="content">
      <div class="content-inner">
        <div class="content-header">
          <h2>Global function control</h2>
          <button class="btn back">Back to edit screen</button>
        </div>

        <div class="function-list">
          <table>
            <thead>
              <tr><th class="col-function">Funcition</th><th class="col-trigger">Trigger bit device</th><th>Comment</th></tr>
            </thead>
            <tbody>
              <tr><td class="focused">Switch page</td><td>[00]R000000</td><td></td></tr>
            </tbody>
          </table>
          <span class="mark mark-row"></span>
        </div>

        <div class="actions">
          <button class="btn">Add</button>
          <button class="btn">Delete</button>
          <button class="btn settings">Settings</button>
          <button class="btn up" disabled>Up</button>
          <button class="btn down" disabled>Down</button>
          <span class="count-label">Numberof functions</span>
          <span>1/128</span>
          <span class="mark mark-add"></span>
        </div>
      </div>
    </main>

    <div class="side-tools">
      <div class="toolbar vertical">
        <span class="grip"></span>
        <button class="tool" aria-label="Line"><svg class="icon"><use href="#i-line"/></svg></button>
        <button class="tool" aria-label="Polyline"><svg class="icon"><use href="#i-poly"/></svg></button>
        <button class="tool" aria-label="Rectangle"><svg class="icon"><use href="#i-rect"/></svg></button>
        <button class="tool" aria-label="Polygon"><svg class="icon"><use href="#i-hex"/></svg></button>
        <button class="tool" aria-label="Ellipse"><svg class="icon"><use href="#i-ellipse"/></svg></button>
        <button class="tool" aria-label="Arc"><svg class="icon"><use href="#i-arc"/></svg></button>
        <button class="tool" aria-label="Fan"><svg class="icon"><use href="#i-fan"/></svg></button>
        <span class="sep"></span>
        <button class="tool" aria-label="Image"><svg class="icon"><use href="#i-pic"/></svg></button>
        <button class="tool" aria-label="Frame"><svg class="icon"><use href="#i-frame"/></svg></button>
        <span class="sep"></span>
        <button class="tool" aria-label="Text"><svg class="icon"><use href="#i-text"/></svg></button>
        <button class="tool" aria-label="Note"><svg class="icon"><use href="#i-note"/></svg></button>
        <span class="sep"></span>
        <button class="tool" aria-label="DXF"><svg class="icon"><use href="#i-dxf"/></svg></button>
        <button class="tool" aria-label="Grid"><svg class="icon"><use href="#i-grid"/></svg></button>
        <button class="tool" aria-label="Table"><svg class="icon"><use href="#i-grid2"/></svg></button>
        <button class="tool" aria-label="Window"><svg class="icon"><use href="#i-winarrow"/></svg></button>
        <button class="more" aria-label="More"></button>
      </div>
      <div>
        <div class="toolbar vertical">
          <span class="grip"></span>
          <button class="tool" aria-label="Numeric"><svg class="icon"><use href="#i-123"/></svg></button>
          <button class="tool" aria-label="Text display"><svg class="icon"><use href="#i-abc"/></svg></button>
          <button class="tool" aria-label="List"><svg class="icon"><use href="#i-list"/></svg></button>
          <button class="tool" aria-label="Sound"><svg class="icon"><use href="#i-sound"/></svg></button>
          <button class="tool" aria-label="Camera"><svg class="icon"><use href="#i-video"/></svg></button>
          <button class="tool" aria-label="Movie"><svg class="icon"><use href="#i-film"/></svg></button>
          <button class="tool" aria-label="Function"><svg class="icon"><use href="#i-glob2"/></svg></button>
          <button class="tool" aria-label="Image folder"><svg class="icon"><use href="#i-picfold"/></svg></button>
          <button class="tool" aria-label="PC window"><svg class="icon"><use href="#i-pcwin"/></svg></button>
          <button class="tool" aria-label="Video"><svg class="icon"><use href="#i-cam"/></svg></button>
          <span class="sep"></span>
          <button class="tool" aria-label="Bar graph"><svg class="icon"><use href="#i-bar"/></svg></button>
          <button class="tool" aria-label="Meter"><svg class="icon"><use href="#i-meter"/></svg></button>
          <button class="tool" aria-label="Gauge"><svg class="icon"><use href="#i-gauge"/></svg></button>
          <button class="tool" aria-label="Stacked bar"><svg class="icon"><use href="#i-stack"/></svg></button>
          <button class="tool" aria-label="Pie chart"><svg class="icon"><use href="#i-pie"/></svg></button>
          <button class="tool" aria-label="Trend"><svg class="icon"><use href="#i-trend"/></svg></button>
          <button class="tool" aria-label="Closed area"><svg class="icon"><use href="#i-loop"/></svg></button>
          <button class="more" aria-label="More"></button>
        </div>
        <div class="toolbar vertical">
          <span class="grip"></span>
          <button class="tool light" aria-label="Switch"><svg class="icon"><use href="#i-touch"/></svg></button>
          <button class="tool" aria-label="Lamp switch"><svg class="icon"><use href="#i-touch"/></svg></button>
          <button class="tool" aria-label="Lamp"><svg class="icon"><use href="#i-bulb"/></svg></button>
          <button class="tool" aria-label="Multi lamp"><svg class="icon"><use href="#i-blobs"/></svg></button>
          <span class="sep"></span>
          <button class="tool" aria-label="Stack"><svg class="icon"><use href="#i-stackwin"/></svg></button>
          <button class="more" aria-label="More"></button>
        </div>
      </div>
    </div>
  </div>

  <div class="toolbar-row">
    <div class="toolbar">
      <span class="grip"></span>
      <button class="tool" aria-label="Select parts"><svg class="icon"><use href="#i-parts"/></svg></button>
      <button class="tool pressed" aria-label="Pointer"><svg class="icon"><use href="#i-arrow"/></svg></button>
      <span class="sep"></span>
      <button class="tool" aria-label="Show"><svg class="icon"><use href="#i-show"/></svg></button>
      <button class="tool" aria-label="Convert"><svg class="icon"><use href="#i-convert"/></svg></button>
      <button class="tool" aria-label="Clear"><svg class="icon"><use href="#i-xbox"/></svg></button>
      <span class="sep"></span>
      <button class="tool" aria-label="Rotate"><svg class="icon"><use href="#i-rotate"/></svg></button>
      <button class="tool" aria-label="Flip horizontal"><svg class="icon"><use href="#i-fliph"/></svg></button>
      <button class="tool" aria-label="Flip vertical"><svg class="icon"><use href="#i-flipv"/></svg></button>
      <button class="tool" aria-label="Scale"><svg class="icon"><use href="#i-tri"/></svg></button>
      <span class="sep"></span>
      <button class="tool" aria-label="To front"><svg class="icon"><use href="#i-front"/></svg></button>
      <button class="tool" aria-label="To back"><svg class="icon"><use href="#i-back"/></svg></button>
      <button class="tool" aria-label="Forward"><svg class="icon"><use href="#i-fwd"/></svg></button>
      <button class="tool" aria-label="Backward"><svg class="icon"><use href="#i-bwd"/></svg></button>
      <button class="tool" aria-label="Group"><svg class="icon"><use href="#i-group"/></svg></button>
      <button class="tool" aria-label="Ungroup"><svg class="icon"><use href="#i-ungroup"/></svg></button>
      <button class="tool" aria-label="Align"><svg class="icon"><use href="#i-align"/></svg></button>
      <button class="drop" aria-label="Align options"></button>
      <button class="tool" aria-label="Text style"><svg class="icon"><use href="#i-abox"/></svg></button>
      <button class="more" aria-label="More"></button>
    </div>
    <div class="toolbar">
      <span class="grip"></span>
      <button class="tool" aria-label="Align to selection"><svg class="icon"><use href="#i-asel"/></svg></button>
      <span class="sep"></span>
      <button class="tool" aria-label="Align left"><svg class="icon"><use href="#i-al"/></svg></button>
      <button class="tool" aria-label="Align right"><svg class="icon"><use href="#i-ar"/></svg></button>
      <button class="tool" aria-label="Align top"><svg class="icon"><use href="#i-at"/></svg></button>
      <button class="tool" aria-label="Align bottom"><svg class="icon" viewBox="0 0 16 16"><path d="M0 10.500h16" stroke="#999"/><path d="M3.500 1.500h9v7h-9z" fill="#fff" stroke="#888"/><path d="M8 4v10l2-2 2 4 2-1-2-4h3z" fill="#fff" stroke="#888"/></svg></button>
      <button class="tool" aria-label="Align center"><svg class="icon" viewBox="0 0 16 16"><path d="M1.500 3.500h10v7h-10z" fill="#fff" stroke="#888"/><path d="M6 0v14" stroke="#999"/><path d="M8 4v10l2-2 2 4 2-1-2-4h3z" fill="#fff" stroke="#888"/></svg></button>
      <button class="tool" aria-label="Align middle"><svg class="icon" viewBox="0 0 16 16"><path d="M2.500.5h10v8h-10z" fill="#fff" stroke="#888"/><path d="M0 5h15" stroke="#999"/><path d="M8 4v10l2-2 2 4 2-1-2-4h3z" fill="#fff" stroke="#888"/></svg></button>
      <button class="more" aria-label="More"></button>
    </div>
  </div>

  <div class="toolbar-row">
    <div class="toolbar coords">
      <span class="grip"></span>
      <span class="mark-text open">(</span>
      <span class="spin"><input type="text" aria-label="Start X" disabled><span class="spin-buttons"><button aria-label="Up"></button><button aria-label="Down"></button></span></span>
      <span class="mark-text">,</span>
      <span class="spin"><input type="text" aria-label="Start Y" disabled><span class="spin-buttons"><button aria-label="Up"></button><button aria-label="Down"></button></span></span>
      <span class="mark-text wide">)-(</span>
      <span class="spin"><input type="text" aria-label="End X" disabled><span class="spin-buttons"><button aria-label="Up"></button><button aria-label="Down"></button></span></span>
      <span class="mark-text">,</span>
      <span class="spin"><input type="text" aria-label="End Y" disabled><span class="spin-buttons"><button aria-label="Up"></button><button aria-label="Down"></button></span></span>
      <span class="mark-text">)</span>
      <span class="spin small"><input type="text" aria-label="Width" disabled><span class="spin-buttons"><button aria-label="Up"></button><button aria-label="Down"></button></span></span>
      <span class="mark-text">x</span>
      <span class="spin small"><input type="text" aria-label="Height" disabled><span class="spin-buttons"><button aria-label="Up"></button><button aria-label="Down"></button></span></span>
    </div>
  </div>

  <footer class="statusbar">
    <span class="model">VT5-WX15</span>
    <span class="device">KEYENCE KV-X500/X300 (Ethernet)</span>
    <span class="pos">----,----</span>
  </footer>
</body>
</html>
```

FILE: styles.css
```css
* {
  box-sizing: border-box;
}

body {
  margin: 0;
  height: 100vh;
  display: flex;
  flex-direction: column;
  overflow: hidden;
  background-color: #f0f0f0;
  color: #000;
  font-family: "Liberation Sans", Arial, sans-serif;
  font-size: 11px;
}

h1, h2 {
  margin: 0;
  font-size: inherit;
  font-weight: normal;
}

button, input, select {
  font: inherit;
  color: inherit;
  margin: 0;
  padding: 0;
  border: none;
  background: none;
}

.sprite {
  display: none;
}

.icon {
  width: 16px;
  height: 16px;
  flex: none;
  overflow: visible;
}

.t7, .t9, .t14, .t20 {
  font-family: "Liberation Sans", Arial, sans-serif;
  text-anchor: middle;
}

.t7 { font-size: 7px; font-weight: bold; }
.t9 { font-size: 9px; fill: #888; }
.t14 { font-size: 14px; font-weight: bold; }
.t20 { font-size: 20px; font-weight: bold; }

/* Title and menu */
.titlebar {
  height: 24px;
  flex: none;
  display: flex;
  align-items: center;
  padding-left: 2px;
  gap: 5px;
  border-top: 1px solid #fff;
  background-color: #0078d7;
  color: #fff;
  font-family: "Noto Sans", "Open Sans", sans-serif;
}

.window-buttons {
  margin-left: auto;
  margin-right: 2px;
  display: flex;
}

.window-buttons button {
  width: 46px;
  height: 22px;
}

.window-buttons svg {
  width: 10px;
  height: 10px;
  fill: none;
  stroke: #fff;
}

.menubar {
  height: 24px;
  flex: none;
  display: flex;
  align-items: center;
  gap: 19px;
  border-top: 1px solid #fff;
  border-bottom: 1px solid #a0a0a0;
  border-right: 1px solid #a0a0a0;
  font-family: "Noto Sans", "Open Sans", sans-serif;
}

.menubar .grip {
  margin-right: -8px;
}

.menubar a {
  color: #000;
  text-decoration: none;
}

/* Toolbars */
.toolbar-row {
  display: flex;
  flex: none;
}

.toolbar {
  height: 27px;
  display: flex;
  align-items: center;
  border-top: 1px solid #fff;
  border-right: 1px solid #a0a0a0;
  border-bottom: 1px solid #a0a0a0;
}

.grip {
  width: 3px;
  height: 20px;
  flex: none;
  margin: 0 2px 0 3px;
  border-left: 1px solid #fff;
  border-right: 1px solid #a0a0a0;
  border-bottom: 1px solid #a0a0a0;
}

.sep {
  width: 2px;
  height: 21px;
  margin: 0 2px;
  flex: none;
  border-left: 1px solid #a0a0a0;
  border-right: 1px solid #fff;
}

.tool {
  width: 22px;
  height: 22px;
  flex: none;
  display: flex;
  align-items: center;
  justify-content: center;
  color: #999;
}

.tool.pressed {
  background-color: #f8f8f8;
  border: 1px solid;
  border-color: #a0a0a0 #fff #fff #a0a0a0;
}

.tool.dark { color: #444; }
.tool.red { color: #dc3434; }
.tool.blue { color: #2f78c4; }
.tool.light { color: #ddd; }

.more {
  width: 12px;
  height: 22px;
  flex: none;
  display: flex;
  align-items: flex-end;
  justify-content: center;
  padding-bottom: 3px;
}

.more::after {
  content: "";
  border: 3px solid transparent;
  border-top: 4px solid #000;
  border-bottom: none;
}

.drop {
  width: 12px;
  height: 22px;
  display: flex;
  align-items: center;
  justify-content: center;
}

.drop::after {
  content: "";
  border: 3px solid transparent;
  border-bottom-color: #666;
  border-top: none;
}

.combo {
  position: relative;
  height: 19px;
  background-color: #fff;
  color: #666;
  font-family: "Liberation Mono", monospace;
}

.combo.gray {
  background-color: #ccc;
  border: 1px solid #bfbfbf;
}

.combo select {
  width: 100%;
  height: 100%;
  padding-left: 4px;
  appearance: none;
  opacity: 1;
}

.combo svg {
  position: absolute;
  right: 4px;
  top: 8px;
  width: 9px;
  height: 5px;
  fill: none;
  stroke: #a0a0a0;
}

.page-combo {
  width: 140px;
  height: 22px;
}

.page-combo select {
  padding-left: 32px;
}

.zoom-combo {
  width: 59px;
  margin-left: 1px;
}

.id-combo {
  width: 120px;
}

.spin {
  display: flex;
  width: 51px;
  height: 21px;
  padding: 1px;
  border: 1px solid #ccc;
}

.spin.small {
  width: 49px;
}

.spin input {
  min-width: 0;
  flex: 1;
}

.spin-buttons {
  width: 16px;
  display: flex;
  flex-direction: column;
  gap: 1px;
}

.spin-buttons button {
  flex: 1;
  display: flex;
  align-items: center;
  justify-content: center;
  border: 1px solid #d4d4d4;
}

.spin-buttons button::after {
  content: "";
  border: 3px solid transparent;
  border-top: none;
  border-bottom-color: #555;
}

.spin-buttons button:last-child::after {
  border-bottom: none;
  border-top: 3px solid #555;
}

.id-spin {
  width: 56px;
  height: 19px;
  color: #666;
  font-family: "Liberation Mono", monospace;
}

.id-spin input {
  padding-left: 2px;
}

/* Workspace */
.workspace {
  flex: 1;
  min-height: 0;
  display: flex;
}

.sidebar {
  width: 240px;
  flex: none;
  display: flex;
  flex-direction: column;
  padding-top: 1px;
  border-top: 1px solid #a0a0a0;
}

.panel-header {
  height: 19px;
  flex: none;
  display: flex;
  align-items: center;
  padding: 0 3px 0 4px;
  gap: 1px;
  margin-bottom: 2px;
  background-color: #bfcddb;
  font-family: "Noto Sans", "Open Sans", sans-serif;
}

.panel-header h2 {
  flex: 1;
  font-weight: 500;
}

.panel-header button {
  width: 14px;
  height: 14px;
  display: flex;
  align-items: center;
  justify-content: center;
  background-color: #f0f0f0;
  border: 1px solid;
  border-color: #fff #777 #777 #fff;
}

.panel-header svg {
  width: 10px;
  height: 10px;
  fill: none;
  stroke: #000;
}

.tree {
  flex: 1;
  min-height: 0;
  margin: 0;
  padding: 1px;
  list-style: none;
  background-color: #fff;
  border: 1px solid #828790;
}

.tree li {
  height: 16px;
  display: flex;
  align-items: center;
  padding-left: 7px;
  white-space: nowrap;
}

.tree .icon {
  margin: 0 5px 0 6px;
  color: #999;
}

.tree .child {
  padding-left: 35px;
}

.tree .selected {
  background-color: #f0f0f0;
  font-weight: bold;
  font-size: 12px;
}

.expander {
  width: 9px;
  height: 9px;
  border: 1px solid #919191;
  border-radius: 1px;
  background: linear-gradient(#2f4fa0, #2f4fa0) center / 5px 1px no-repeat #fbfbfb;
}

.expander.plus {
  background: linear-gradient(#2f4fa0, #2f4fa0) center / 5px 1px no-repeat, linear-gradient(#2f4fa0, #2f4fa0) center / 1px 5px no-repeat #fbfbfb;
}

.tree-tools {
  height: 24px;
  flex: none;
  display: flex;
  align-items: center;
  padding-left: 2px;
}

.tree-tools .tool {
  color: #bcc2d4;
}

.tabs {
  height: 23px;
  flex: none;
  display: flex;
  align-items: flex-start;
  font-family: "Noto Sans", "Open Sans", sans-serif;
}

.tab {
  height: 21px;
  display: flex;
  align-items: center;
  gap: 4px;
  padding: 0 3px;
  border: 1px solid #696969;
  border-right-width: 2px;
  border-bottom-width: 2px;
}

.tab.active {
  height: 23px;
  padding-left: 5px;
  padding-right: 6px;
  border-width: 0 0 1px;
}

.tabs::after {
  content: "";
  flex: 1;
  border-top: 1px solid #696969;
}

.content {
  flex: 1;
  min-width: 0;
  margin-left: 4px;
  border-top: 2px solid #696969;
  border-left: 2px solid #696969;
  border-right: 2px solid #fff;
  border-bottom: 1px solid #fff;
}

.content-inner {
  width: 639px;
  margin-left: 11px;
}

.content-header {
  height: 49px;
  display: flex;
  align-items: flex-start;
  justify-content: space-between;
  padding: 13px 12px 0 0;
  border-bottom: 2px solid #696969;
}

.content-header h2 {
  line-height: 18px;
}

.btn {
  width: 69px;
  height: 23px;
  background-color: #e1e1e1;
  border: 1px solid #adadad;
}

.btn:disabled {
  background-color: #ccc;
  border-color: #bfbfbf;
  color: #838383;
}

.btn.back {
  width: 111px;
}

.function-list {
  position: relative;
  height: 232px;
  margin: 25px 8px 0 10px;
  background-color: #ababab;
  border: 1px solid;
  border-color: #696969 #fff #fff #696969;
}

.function-list table {
  width: 100%;
  border-collapse: collapse;
  table-layout: fixed;
}

.function-list th {
  height: 17px;
  padding: 0 3px;
  text-align: left;
  font-weight: normal;
  background-color: #f0f0f0;
  border-right: 1px solid #a0a0a0;
}

.function-list td {
  height: 19px;
  padding: 0 3px;
  background-color: #0078d7;
  color: #fff;
  border-right: 1px solid #fff;
  border-bottom: 1px solid #fff;
}

.function-list .focused {
  outline: 1px dotted #f08b35;
  outline-offset: -1px;
}

.col-function { width: 193px; }
.col-trigger { width: 93px; }

.mark {
  position: absolute;
  border: 4px solid #f00;
  pointer-events: none;
}

.mark-row {
  top: 13px;
  left: -4px;
  right: -1px;
  height: 28px;
}

.actions {
  position: relative;
  display: flex;
  align-items: center;
  margin: 11px 0 0 10px;
}

.btn.settings { margin-left: 6px; }
.btn.up { margin-left: 15px; }
.btn.down { margin-left: 2px; }

.count-label {
  margin: 0 12px 0 39px;
}

.mark-add {
  top: -3px;
  left: -4px;
  width: 74px;
  height: 29px;
}

/* Right part palettes */
.side-tools {
  display: flex;
  align-items: flex-start;
  flex: none;
}

.toolbar.vertical {
  width: 26px;
  height: auto;
  flex-direction: column;
  border-left: 1px solid #fff;
}

.vertical .grip {
  width: 20px;
  height: 3px;
  margin: 3px 0;
}

.vertical .sep {
  width: 22px;
  height: 2px;
  margin: 2px 0;
  border: none;
  border-top: 1px solid #a0a0a0;
  border-bottom: 1px solid #fff;
}

.vertical .more {
  width: 22px;
  height: 12px;
  align-items: center;
  justify-content: flex-end;
  padding: 0 3px 0 0;
}

.vertical .more::after {
  border: 4px solid transparent;
  border-left-color: #000;
  border-right: none;
}

/* Bottom */
.coords {
  height: 30px;
  padding-right: 17px;
}

.mark-text {
  width: 17px;
  text-align: center;
  font-family: "Liberation Mono", monospace;
}

.mark-text.open {
  width: 12px;
  text-align: left;
}

.mark-text.wide {
  width: 30px;
}

.statusbar {
  height: 22px;
  flex: none;
  display: flex;
  justify-content: flex-end;
  gap: 3px;
  padding-top: 2px;
  font-family: "Noto Sans", "Open Sans", sans-serif;
}

.statusbar span {
  padding: 0 3px;
  line-height: 18px;
  border-top: 1px solid #a0a0a0;
  border-left: 1px solid #a0a0a0;
  white-space: nowrap;
}

.statusbar .model {
  width: 61px;
}

.statusbar .device {
  width: 187px;
}

.statusbar .pos {
  width: 51px;
}
```
